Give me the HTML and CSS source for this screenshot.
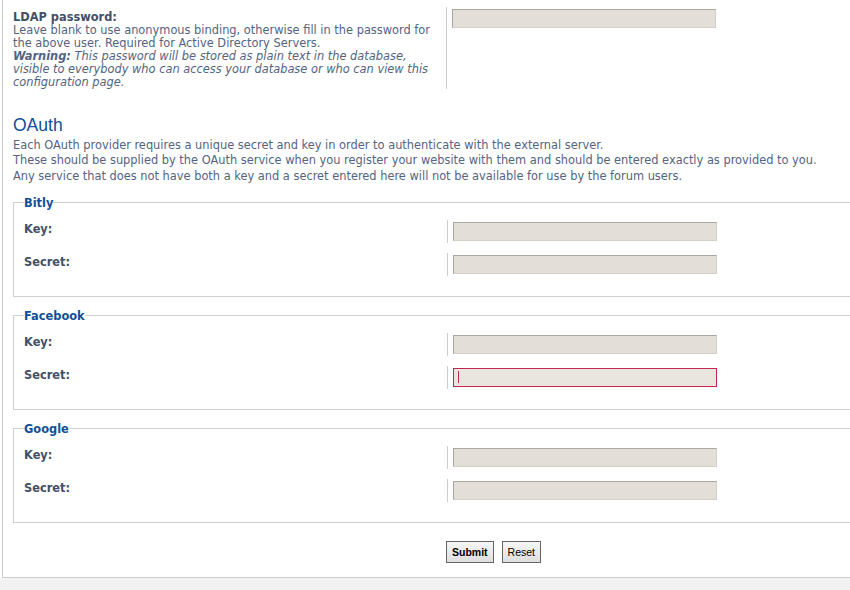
FILE: index.html
```html
<!DOCTYPE html>
<html lang="en">
<head>
    <meta charset="UTF-8">
    <meta name="viewport" content="width=device-width, initial-scale=1.0">
    <title>ACP - Authentication</title>
    <link rel="stylesheet" href="styles.css">
</head>
<body>
  <div class="wrap">
    <div class="panel">
      <dl class="row row-top">
        <dt>
          <label for="ldap_password">LDAP password:</label>
          <span class="explain">Leave blank to use anonymous binding, otherwise fill in the password for the above user. Required for Active Directory Servers.<br>
          <em><strong>Warning:</strong> This password will be stored as plain text in the database, visible to everybody who can access your database or who can view this configuration page.</em></span>
        </dt>
        <dd><input type="password" class="inputbox" id="ldap_password"></dd>
      </dl>

      <h2>OAuth</h2>
      <p class="intro">Each OAuth provider requires a unique secret and key in order to authenticate with the external server.<br>
        These should be supplied by the OAuth service when you register your website with them and should be entered exactly as provided to you.<br>
        Any service that does not have both a key and a secret entered here will not be available for use by the forum users.</p>

      <fieldset>
        <legend>Bitly</legend>
        <dl class="row">
          <dt><label for="bitly_key">Key:</label></dt>
          <dd><input type="text" class="inputbox" id="bitly_key"></dd>
        </dl>
        <dl class="row">
          <dt><label for="bitly_secret">Secret:</label></dt>
          <dd><input type="text" class="inputbox" id="bitly_secret"></dd>
        </dl>
      </fieldset>

      <fieldset>
        <legend>Facebook</legend>
        <dl class="row">
          <dt><label for="facebook_key">Key:</label></dt>
          <dd><input type="text" class="inputbox" id="facebook_key"></dd>
        </dl>
        <dl class="row">
          <dt><label for="facebook_secret">Secret:</label></dt>
          <dd><span class="field focus"><input type="text" class="inputbox active" id="facebook_secret"></span></dd>
        </dl>
      </fieldset>

      <fieldset>
        <legend>Google</legend>
        <dl class="row">
          <dt><label for="google_key">Key:</label></dt>
          <dd><input type="text" class="inputbox" id="google_key"></dd>
        </dl>
        <dl class="row">
          <dt><label for="google_secret">Secret:</label></dt>
          <dd><input type="text" class="inputbox" id="google_secret"></dd>
        </dl>
      </fieldset>

      <div class="buttons">
        <input type="submit" class="button1" value="Submit">
        <input type="reset" class="button2" value="Reset">
      </div>
    </div>
  </div>
</body>
</html>
```

FILE: styles.css
```css
* {
  margin: 0px;
  padding: 0px;
}

html,
body {
  overflow: hidden;
}

body {
  background-color: #f2f2f2;
  font-family: "DejaVu Sans", Verdana, sans-serif;
  font-size: 11.4px;
  color: #536482;
}

.wrap {
  width: 1000px;
  padding-left: 2px;
  background-color: #fff;
}

.panel {
  border-left: 1px solid #cdcdcd;
  border-bottom: 1px solid #cdcdcd;
  padding: 7px 0 14px 10px;
}

.row {
  display: flex;
}
.row dt {
  width: 423px;
  padding-top: 3px;
  line-height: 13.3px;
}
.row-top dt {
  width: 433px;
  padding-top: 4px;
  line-height: 13px;
}
.row dd {
  border-left: 1px solid #cdcdcd;
  padding: 2px 0 2px 5px;
}

label {
  display: block;
  font-weight: bold;
  color: #425067;
}
.explain {
  display: block;
}

.inputbox {
  display: block;
  width: 264px;
  height: 19px;
  box-sizing: border-box;
  border: 1px solid;
  border-color: #aaa7a1 #d3cfc7 #d3cfc7 #aaa7a1;
  background-color: #e3dfd8;
  outline: none;
}
.inputbox.active {
  border: 1px solid #c2284f;
  background-color: #e9e6e0;
}

.field {
  position: relative;
  display: block;
  width: 264px;
}
.field.focus::after {
  content: "";
  position: absolute;
  left: 5px;
  top: 3px;
  width: 1px;
  height: 12px;
  background-color: #bc2a4d;
}

h2 {
  margin-top: 26px;
  font-family: "Liberation Sans", Arial, sans-serif;
  font-size: 17.5px;
  font-weight: normal;
  line-height: 20px;
  color: #115098;
}

.intro {
  margin-top: 3px;
  line-height: 15.3px;
}

fieldset {
  margin-top: 12px;
  padding: 0 10px 20px;
  border: 1px solid #d0d0d0;
}
legend {
  padding: 0;
  font-weight: bold;
  line-height: 14px;
  color: #115098;
}
fieldset .row {
  margin-top: 10px;
}

.buttons {
  display: flex;
  gap: 8px;
  margin-top: 18px;
  padding-left: 433px;
}
.button1,
.button2 {
  height: 22px;
  padding: 0 5px;
  border: 1px solid #666;
  background: linear-gradient(#f6f6f6, #dedede);
  font-family: "Liberation Sans", Arial, sans-serif;
  font-size: 10.5px;
  color: #000;
}
.button1 {
  font-weight: bold;
}
```
